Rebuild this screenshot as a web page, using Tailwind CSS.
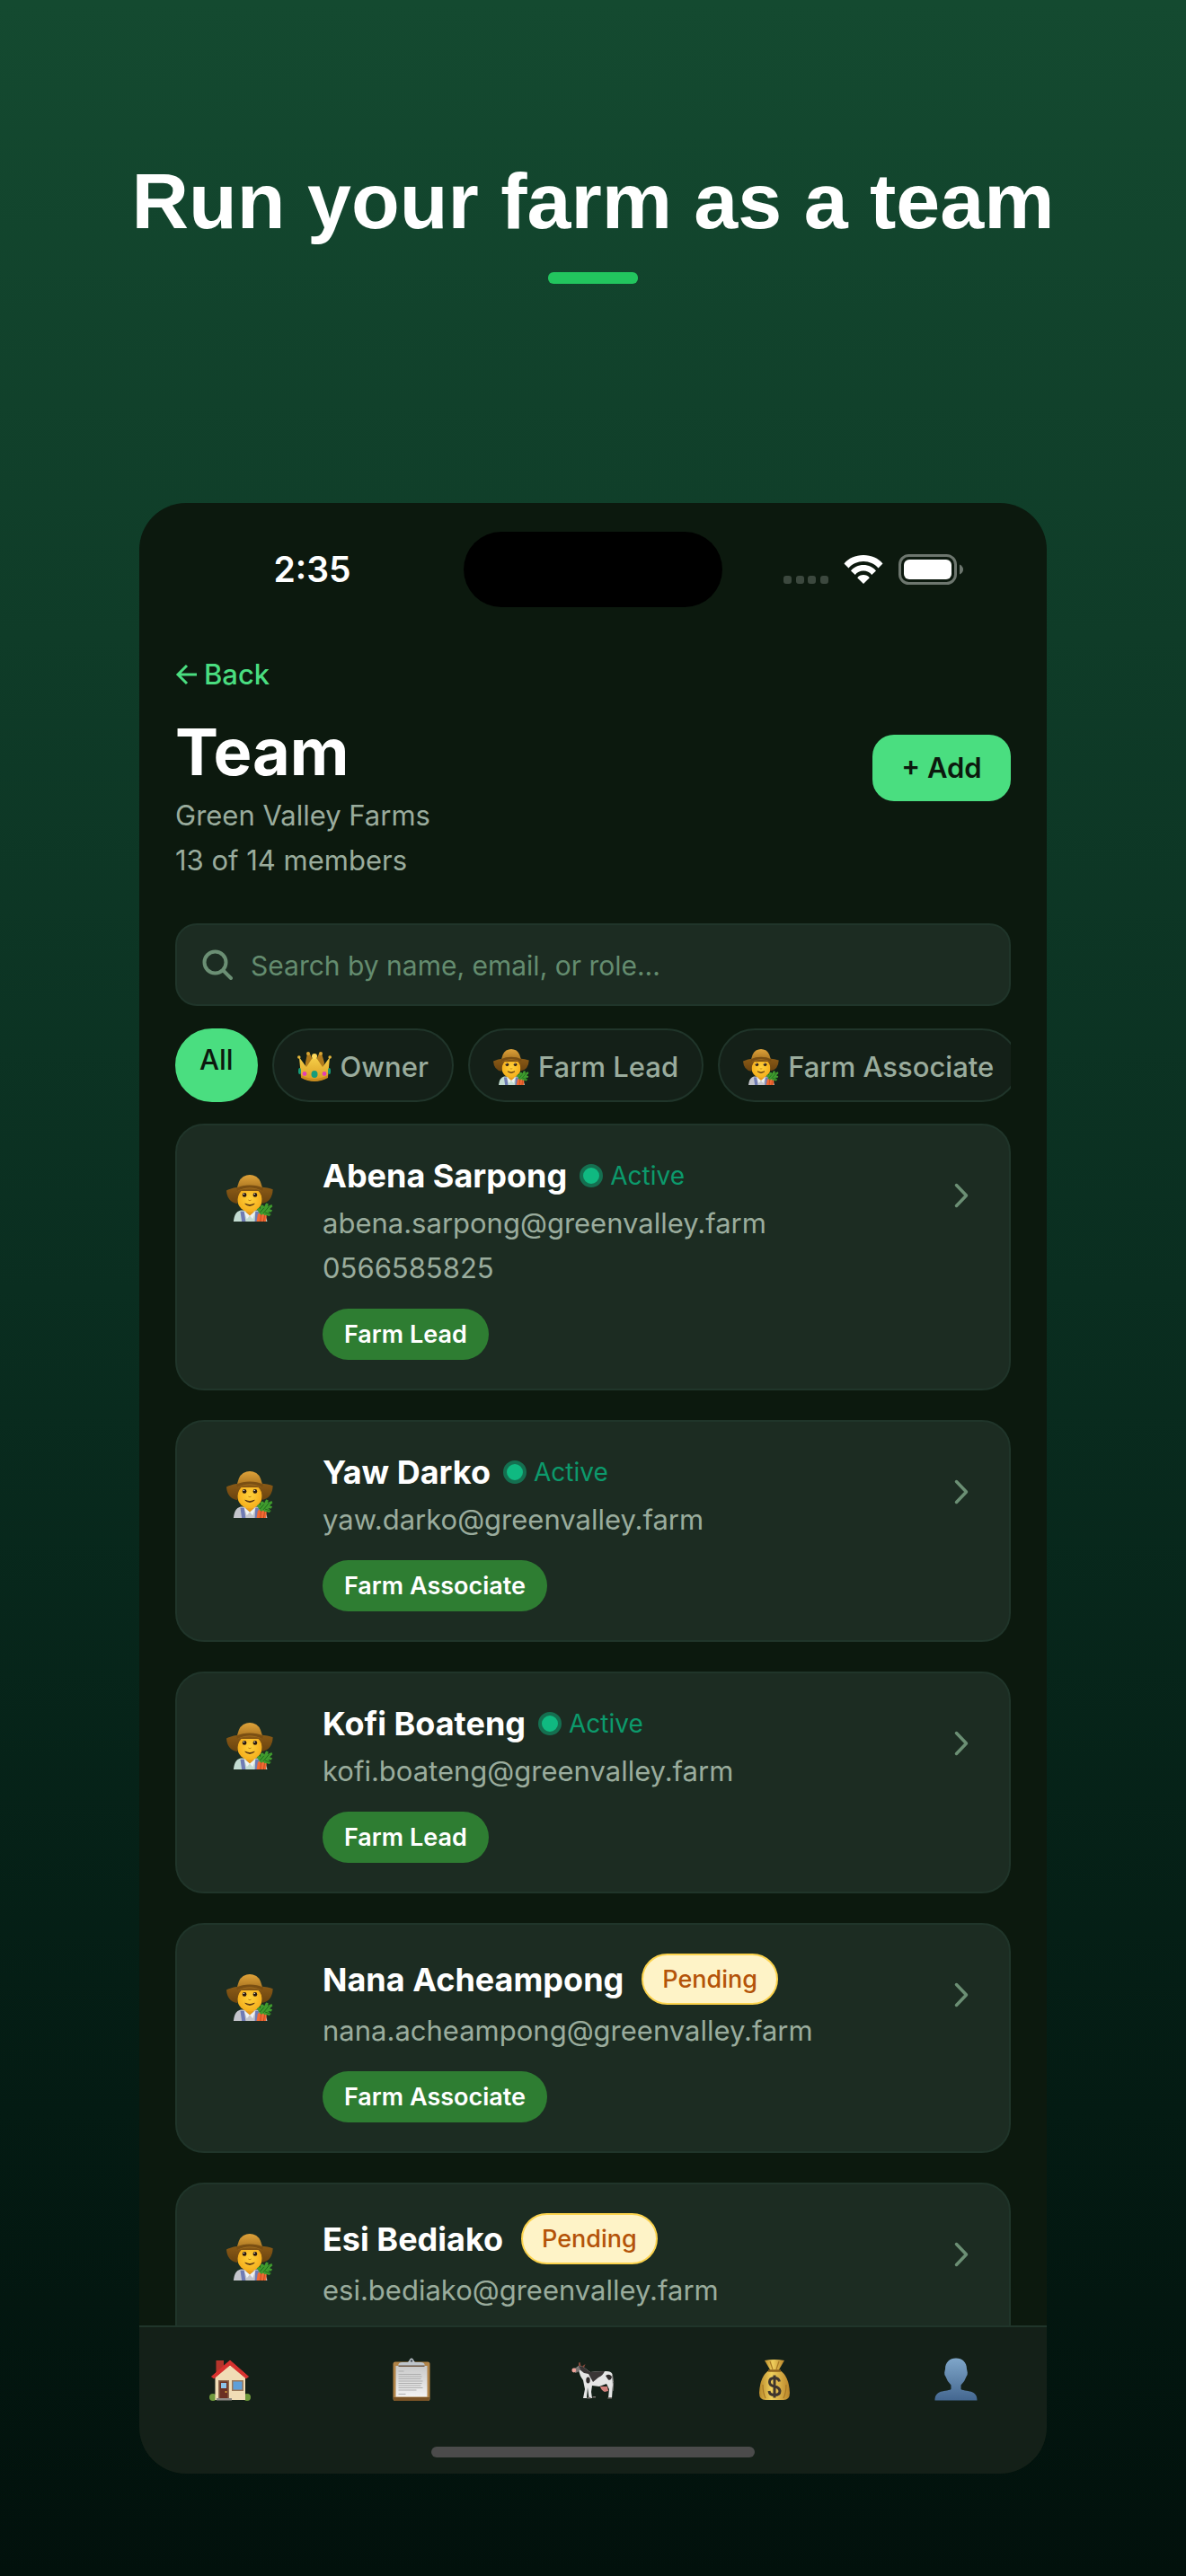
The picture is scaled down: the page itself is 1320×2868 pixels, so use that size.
<!DOCTYPE html>
<html lang="en">
<head>
<meta charset="utf-8">
<meta name="viewport" content="width=device-width, initial-scale=1">
<title>Run your farm as a team</title>
<script src="https://cdn.jsdelivr.net/npm/@tailwindcss/browser@4"></script>
</head>
<body class="flex h-screen flex-col items-center overflow-hidden bg-linear-to-b from-[#144a30] via-[#0a2e20] to-[#02110c] px-8 pt-[172px] pb-[114px] font-['Inter',sans-serif] text-white">

<!-- Shared drawings -->
<svg class="absolute h-0 w-0" aria-hidden="true">
  <defs>
    <linearGradient id="hatTop" x1="0" y1="0" x2="0" y2="1"><stop offset="0" stop-color="#dfa33a"/><stop offset="1" stop-color="#a06c1c"/></linearGradient>
    <linearGradient id="brim" x1="0" y1="0" x2="0" y2="1"><stop offset="0" stop-color="#8a5a16"/><stop offset="1" stop-color="#6a430f"/></linearGradient>
    <radialGradient id="skin"><stop offset="0" stop-color="#ffd23c"/><stop offset="1" stop-color="#f5ae1c"/></radialGradient>
    <linearGradient id="gold" x1="0" y1="0" x2="0" y2="1"><stop offset="0" stop-color="#f7d14a"/><stop offset="1" stop-color="#d99b22"/></linearGradient>
    <linearGradient id="sack" x1="0" y1="0" x2="1" y2="0"><stop offset="0" stop-color="#b98a2a"/><stop offset=".4" stop-color="#f0cf5c"/><stop offset="1" stop-color="#b9852a"/></linearGradient>
    <linearGradient id="person" x1="0" y1="0" x2="0" y2="1"><stop offset="0" stop-color="#7fa6c9"/><stop offset="1" stop-color="#446790"/></linearGradient>
    <linearGradient id="sheet" x1="0" y1="0" x2="0" y2="1"><stop offset="0" stop-color="#c9c9c9"/><stop offset="1" stop-color="#f2f2f2"/></linearGradient>
    <symbol id="farmer" viewBox="35 52 158 158">
      <path d="M59 210c2-20 8-34 24-38h60c16 4 26 16 30 38z" fill="currentColor"/>
      <path d="M82 176h13l5 34H87zM133 176h13l-2 34h-13z" fill="#6f7bb4"/>
      <path d="M101 160h26v18l-13 14-13-14z" fill="#e79a1c"/>
      <path d="M95 176l19 14-10 12zM133 176l-19 14 10 12z" fill="#eef2f2"/>
      <ellipse cx="114" cy="134" rx="42" ry="44" fill="url(#skin)"/>
      <path d="M72 150q-34-6-37-45 20-10 45-12h70q26 2 42 8-2 42-37 48 3-28-12-42H85q-14 16-13 43z" fill="url(#brim)"/>
      <path d="M70 108q3-38 22-50 22-12 44 0 18 12 22 50-20-10-44-10t-44 10z" fill="url(#hatTop)"/>
      <path d="M70 108q20-12 44-12t44 12l1-12q-20-9-45-9t-45 9z" fill="#7a4f13"/>
      <circle cx="96" cy="120" r="7" fill="#2a1a10"/><circle cx="132" cy="120" r="7" fill="#2a1a10"/>
      <circle cx="94" cy="117" r="2" fill="#fff"/><circle cx="130" cy="117" r="2" fill="#fff"/>
      <path d="M109 137q5 5 10 0" fill="none" stroke="#c57f12" stroke-width="3"/>
      <path d="M98 150q16 9 32 0-16 13-32 0z" fill="#3b1c0a" stroke="#3b1c0a" stroke-width="2"/>
      <path d="M141 186l8-6 6 4 8-2 8 8-2 20h-32z" fill="#f06a34"/>
      <path d="M152 186l-2 24M164 190l-3 20" stroke="#c4471c" stroke-width="3"/>
      <path d="M148 184l-10-16 8-6 3 6 1-12 9-2 4 6 6-12 8 2-2 8 13-6 3 7-10 9 9 3-3 7-11-1 10 9-6 6-12-4-4 2-4-6-6 4z" fill="#3f9b2e"/>
      <path d="M148 180l14-16M160 182l20-24M166 180l18 6" stroke="#1f6a1a" stroke-width="3"/>
    </symbol>
    <symbol id="chevron" viewBox="0 0 16 28"><path d="M2.500 2.500 13.500 14 2.500 25.500" fill="none" stroke="#6b8f74" stroke-width="3.500" stroke-linecap="round" stroke-linejoin="round"/></symbol>
  </defs>
</svg>

<h1 class="font-['Liberation_Sans',sans-serif] text-[88px] leading-[104px] font-bold">Run your farm as a team</h1>
<div class="mt-[27px] h-[13px] w-[100px] shrink-0 rounded-md bg-[#22c55e]"></div>

<div class="mt-[244px] flex min-h-0 w-full max-w-[1010px] flex-1 flex-col overflow-hidden rounded-[52px] bg-[#0c190e]">

  <!-- Status bar -->
  <div class="grid shrink-0 grid-cols-[1fr_288px_1fr] items-center pt-8">
    <div class="pl-6 text-center text-[39px] leading-[48px] font-semibold">2:35</div>
    <div class="h-[84px] rounded-full bg-black"></div>
    <div class="flex items-center justify-end gap-[17px] pr-[93px]">
      <svg class="h-[34px] w-[50px]" viewBox="0 0 50 34" fill="#3c483e"><rect y="24" width="9" height="9" rx="3"/><rect x="14" y="24" width="9" height="9" rx="3"/><rect x="27" y="24" width="9" height="9" rx="3"/><rect x="41" y="24" width="9" height="9" rx="3"/></svg>
      <svg class="h-[34px] w-[44px]" viewBox="0 0 44 34" fill="#fff"><path d="M22 1C13 1 5.500 4.500.5 10.500l5 5C9.500 10.800 15.500 8 22 8s12.500 2.800 16.500 7.500l5-5C38.500 4.500 31 1 22 1z"/><path d="M22 12c-5.800 0-10.800 2.400-14 6.500l4.800 4.500c2-2.800 5.400-4.500 9.200-4.500s7.200 1.700 9.200 4.500l4.800-4.500C32.800 14.400 27.800 12 22 12z"/><path d="M22 23c-2.800 0-5.200 1.200-6.800 3.200L22 33l6.800-6.800C27.200 24.200 24.800 23 22 23z"/></svg>
      <svg class="h-[34px] w-[72px]" viewBox="0 0 72 34"><rect x="1.500" y="1.500" width="62" height="31" rx="10" fill="none" stroke="#6d766e" stroke-width="3"/><rect x="6" y="6" width="53" height="22" rx="6" fill="#fff"/><path d="M68 11.500q4 2 4 5.500t-4 5.500z" fill="#6d766e"/></svg>
    </div>
  </div>

  <main class="flex min-h-0 flex-1 flex-col overflow-hidden px-10 pt-[55px]">
    <a href="#" class="flex shrink-0 items-center gap-2 self-start text-[31px] leading-10 font-medium text-[#4ade80]">
      <svg class="h-6 w-6" viewBox="0 0 24 24" fill="none" stroke="currentColor" stroke-width="3"><path d="M24 12H3M13 2 3 12l10 10"/></svg>Back</a>

    <div class="mt-6 flex shrink-0 items-start justify-between">
      <div>
        <h2 class="mb-1 text-[72px] leading-[84px] font-bold">Team</h2>
        <p class="text-[31px] leading-[50px] text-[#9aac9d]">Green Valley Farms</p>
        <p class="text-[31px] leading-[50px] text-[#9aac9d]">13 of 14 members</p>
      </div>
      <button type="button" class="mt-[23px] h-[74px] w-[154px] rounded-3xl bg-[#4ade80] text-[31px] font-semibold text-[#0c190e]">+ Add</button>
    </div>

    <label class="mt-[45px] flex h-[92px] shrink-0 items-center gap-5 rounded-3xl border-2 border-[#20352a] bg-[#1c2c22] px-7">
      <svg class="h-[34px] w-[34px]" viewBox="0 0 34 34" fill="none" stroke="#6b8f74" stroke-width="4" stroke-linecap="round" aria-hidden="true"><circle cx="14.500" cy="14.500" r="12"/><path d="M23.500 23.500 32 32"/></svg>
      <input type="search" aria-label="Search team" placeholder="Search by name, email, or role..." class="w-full flex-1 bg-transparent pt-0.5 text-[30px] outline-none placeholder:text-[#648c6f]">
    </label>

    <div class="mt-[25px] flex h-[82px] shrink-0 gap-4 overflow-hidden text-[31px] font-medium">
      <button type="button" class="flex shrink-0 items-start rounded-full border-2 border-[#4ade80] bg-[#4ade80] px-[25px] pt-3.5 leading-[38px] text-[#0c190e]">All</button>
      <button type="button" class="flex shrink-0 items-center gap-2.5 rounded-full border-2 border-[#20352a] bg-[#142018] px-[26px] pt-1 text-[#9aac9d]">
        <svg class="h-[34px] w-[38px]" viewBox="0 0 38 34" aria-hidden="true"><path d="M9 12 11 2h3l5 12 5-12h3l3 10-2 14H9z" fill="#b07a1c"/><path d="M2 6l8 11 8-12h2l8 12 8-11-2 22q-15 9-30 0z" fill="url(#gold)"/><path d="M4 26q15 8 30 0v3q-15 8-30 0z" fill="#c98c1e"/><circle cx="1.800" cy="6" r="1.800" fill="#e2b53c"/><circle cx="36.200" cy="6" r="1.800" fill="#e2b53c"/><circle cx="12" cy="2" r="2" fill="#d9a432"/><circle cx="26" cy="2" r="2" fill="#d9a432"/><circle cx="19" cy="5" r="3" fill="#ffd95a"/><ellipse cx="19" cy="25" rx="3.500" ry="4" fill="#169c7a"/><circle cx="8" cy="24.500" r="2.400" fill="#e23fb4"/><circle cx="30" cy="24.500" r="2.400" fill="#e23fb4"/><ellipse cx="2.500" cy="21.500" rx="1.500" ry="3.500" fill="#169c7a"/><ellipse cx="35.500" cy="21.500" rx="1.500" ry="3.500" fill="#169c7a"/></svg>Owner</button>
      <button type="button" class="flex shrink-0 items-center gap-2.5 rounded-full border-2 border-[#20352a] bg-[#142018] px-[26px] pt-1 text-[#9aac9d]">
        <svg class="h-10 w-10 text-[#c3dcd2]" aria-hidden="true"><use href="#farmer"/></svg>Farm Lead</button>
      <button type="button" class="flex shrink-0 items-center gap-2.5 rounded-full border-2 border-[#20352a] bg-[#142018] px-[26px] pt-1 text-[#9aac9d]">
        <svg class="h-10 w-10 text-[#c4c5cc]" aria-hidden="true"><use href="#farmer"/></svg>Farm Associate</button>
    </div>

    <ul class="mt-6 flex flex-col gap-[33px]">
      <li class="flex shrink-0 items-start rounded-[32px] border-2 border-[#20352a] bg-[#1c2c22] p-8">
        <div class="mr-8 flex size-[98px] shrink-0 items-center justify-center text-[#c3dcd2]"><svg class="size-[52px]" aria-hidden="true"><use href="#farmer"/></svg></div>
        <div class="flex-1">
          <div class="flex items-center gap-3.5">
            <h3 class="text-4xl leading-12 font-bold">Abena Sarpong</h3>
            <span class="flex items-center gap-2 text-[28px] leading-9 text-[#0c9a6c]"><i class="size-[26px] rounded-full border-4 border-[#156f50] bg-[#10b981]"></i>Active</span>
          </div>
          <p class="mt-1 text-[31px] leading-[50px] text-[#9aac9d]">abena.sarpong@greenvalley.farm</p>
          <p class="text-[31px] leading-[50px] text-[#9aac9d]">0566585825</p>
          <span class="mt-5 inline-block rounded-full bg-[#2e7d32] px-6 text-[27px] leading-[57px] font-semibold">Farm Lead</span>
        </div>
        <div class="flex h-[92px] w-[42px] shrink-0 items-center justify-center"><svg class="h-7 w-4" aria-hidden="true"><use href="#chevron"/></svg></div>
      </li>

      <li class="flex shrink-0 items-start rounded-[32px] border-2 border-[#20352a] bg-[#1c2c22] p-8">
        <div class="mr-8 flex size-[98px] shrink-0 items-center justify-center text-[#c4c5cc]"><svg class="size-[52px]" aria-hidden="true"><use href="#farmer"/></svg></div>
        <div class="flex-1">
          <div class="flex items-center gap-3.5">
            <h3 class="text-4xl leading-12 font-bold">Yaw Darko</h3>
            <span class="flex items-center gap-2 text-[28px] leading-9 text-[#0c9a6c]"><i class="size-[26px] rounded-full border-4 border-[#156f50] bg-[#10b981]"></i>Active</span>
          </div>
          <p class="mt-1 text-[31px] leading-[50px] text-[#9aac9d]">yaw.darko@greenvalley.farm</p>
          <span class="mt-5 inline-block rounded-full bg-[#2e7d32] px-6 text-[27px] leading-[57px] font-semibold">Farm Associate</span>
        </div>
        <div class="flex h-[92px] w-[42px] shrink-0 items-center justify-center"><svg class="h-7 w-4" aria-hidden="true"><use href="#chevron"/></svg></div>
      </li>

      <li class="flex shrink-0 items-start rounded-[32px] border-2 border-[#20352a] bg-[#1c2c22] p-8">
        <div class="mr-8 flex size-[98px] shrink-0 items-center justify-center text-[#c3dcd2]"><svg class="size-[52px]" aria-hidden="true"><use href="#farmer"/></svg></div>
        <div class="flex-1">
          <div class="flex items-center gap-3.5">
            <h3 class="text-4xl leading-12 font-bold">Kofi Boateng</h3>
            <span class="flex items-center gap-2 text-[28px] leading-9 text-[#0c9a6c]"><i class="size-[26px] rounded-full border-4 border-[#156f50] bg-[#10b981]"></i>Active</span>
          </div>
          <p class="mt-1 text-[31px] leading-[50px] text-[#9aac9d]">kofi.boateng@greenvalley.farm</p>
          <span class="mt-5 inline-block rounded-full bg-[#2e7d32] px-6 text-[27px] leading-[57px] font-semibold">Farm Lead</span>
        </div>
        <div class="flex h-[92px] w-[42px] shrink-0 items-center justify-center"><svg class="h-7 w-4" aria-hidden="true"><use href="#chevron"/></svg></div>
      </li>

      <li class="flex shrink-0 items-start rounded-[32px] border-2 border-[#20352a] bg-[#1c2c22] p-8">
        <div class="mr-8 flex size-[98px] shrink-0 items-center justify-center text-[#c4c5cc]"><svg class="size-[52px]" aria-hidden="true"><use href="#farmer"/></svg></div>
        <div class="flex-1">
          <div class="flex items-center gap-5">
            <h3 class="text-4xl leading-12 font-bold">Nana Acheampong</h3>
            <span class="rounded-full border-2 border-[#fcd34d] bg-[#fef3c7] px-[21px] text-[27px] leading-[53px] font-medium text-[#b45309]">Pending</span>
          </div>
          <p class="mt-1 text-[31px] leading-[50px] text-[#9aac9d]">nana.acheampong@greenvalley.farm</p>
          <span class="mt-5 inline-block rounded-full bg-[#2e7d32] px-6 text-[27px] leading-[57px] font-semibold">Farm Associate</span>
        </div>
        <div class="flex h-[92px] w-[42px] shrink-0 items-center justify-center"><svg class="h-7 w-4" aria-hidden="true"><use href="#chevron"/></svg></div>
      </li>

      <li class="flex shrink-0 items-start rounded-[32px] border-2 border-[#20352a] bg-[#1c2c22] p-8">
        <div class="mr-8 flex size-[98px] shrink-0 items-center justify-center text-[#c4c5cc]"><svg class="size-[52px]" aria-hidden="true"><use href="#farmer"/></svg></div>
        <div class="flex-1">
          <div class="flex items-center gap-5">
            <h3 class="text-4xl leading-12 font-bold">Esi Bediako</h3>
            <span class="rounded-full border-2 border-[#fcd34d] bg-[#fef3c7] px-[21px] text-[27px] leading-[53px] font-medium text-[#b45309]">Pending</span>
          </div>
          <p class="mt-1 mb-[77px] text-[31px] leading-[50px] text-[#9aac9d]">esi.bediako@greenvalley.farm</p>
        </div>
        <div class="flex h-[92px] w-[42px] shrink-0 items-center justify-center"><svg class="h-7 w-4" aria-hidden="true"><use href="#chevron"/></svg></div>
      </li>
    </ul>
  </main>

  <!-- Tab bar -->
  <nav class="shrink-0 border-t-2 border-[#20352a] bg-[#142018] pt-[34px] pb-[18px]">
    <div class="grid grid-cols-5 justify-items-center">
      <a href="#" aria-label="Home"><svg class="size-12" viewBox="0 0 48 48"><circle cx="5" cy="44" r="4" fill="#6f9a3c"/><circle cx="43" cy="44" r="4" fill="#6f9a3c"/><path d="M8.500 3H17v12l-8.500 7z" fill="#b5352c"/><path d="M7.500 21 24 6l17 15v26H7.500z" fill="#f1ddb6"/><path d="M24 3 3.500 21l2.500 2L24 8l18 15 2.500-2z" fill="#d8322f" stroke="#d8322f"/><path d="M11 25h12v22H11z" fill="#8f6a4e"/><path d="M12.500 26.500h9V47h-9z" fill="#6b2f22"/><path d="M14 28h6v6h-6z" fill="#8cc3ea"/><circle cx="19.500" cy="38" r="1" fill="#e8b53c"/><path d="M26 25h13v12H26z" fill="#9b7858"/><path d="M27.500 26.500h10v9h-10z" fill="#5f9fd8"/><path d="M9 45h17v2.500H9z" fill="#8f8a85"/></svg></a>
      <a href="#" aria-label="Tasks"><svg class="size-12" viewBox="0 0 48 48"><rect x="3.500" y="4.500" width="41" height="43.500" rx="2.500" fill="#b08347"/><path d="M4 44h40v2q0 2-2 2H6q-2 0-2-2z" fill="#7b5426"/><path d="M6.500 9h35v34.500h-35z" fill="url(#sheet)"/><path d="M9.500 10V7q1-2 4-2h6c2 0 2-4.500 4.500-4.500S26.500 5 28.500 5h6q3 0 4 2v3z" fill="#bfc5cb"/><path d="M9.500 8.500h29V10h-29z" fill="#6d5844"/><circle cx="24" cy="3.500" r="1.300" fill="#4a5058"/><path d="M9.500 15h6M9.500 18.500h25M9.500 21h26M9.500 23.500h25M9.500 26h27M9.500 28.500h26M9.500 31h25M9.500 33.500h27M9.500 36h20M9.500 40.500h8" stroke="#aeaeae" stroke-width="1.200"/></svg></a>
      <a href="#" aria-label="Livestock"><svg class="size-12" viewBox="0 0 48 48"><path d="M3 13l5-4 5 1q5 4 8 6 8-1 18-1 5 0 6.500 3l.5 13-1 14h-4l1-10-3-6-8 3-8-1-1 7 1 7h-3.500l-1.500-12-1 12h-4l2-10-2-10q-4-5-5-12l-2-2-3 1z" fill="#e6e6e6"/><path d="M8 9l5 1q5 4 8 6 8-1 16-1-2 5-7 7l-6 5q-3-5-5-9l-5-1-5-4-3-1z" fill="#3a3636"/><path d="M4 12l4-3 2 4-3 3-3 1z" fill="#7d7674"/><circle cx="2.800" cy="14" r="2.400" fill="#efa39a"/><path d="M8 9V5.500L9.500 5l1 4zM12 9.500 15.500 7 14 11z" fill="#8a4a3c"/><ellipse cx="18.500" cy="25" rx="2.200" ry="3.400" fill="#2f2b2b"/><path d="M38 20q4-3 7 1-1 5-4 3.500z" fill="#2f2b2b"/><path d="M32 32h8l1 5-4 1q-4-2-5-6z" fill="#d07f7a"/><path d="M45.500 19q2 8 .5 18" fill="none" stroke="#8d8886"/><path d="M18 44h3.500v1.500H17zM24 43h3v1.500h-4zM41 44h4v1.500h-5z" fill="#77706c"/></svg></a>
      <a href="#" aria-label="Finances"><svg class="size-12" viewBox="0 0 48 48"><path d="M13 3q5-1 11-1t11 1l-7 12h-8z" fill="url(#sack)"/><path d="M18 14h12q10 6 11 25 0 8-7 8H14q-7 0-7-8 1-19 11-25z" fill="url(#sack)"/><path d="M17 14.500h14" stroke="#8d601c" stroke-width="2.500"/><path d="M19 4l3 9M29 4l-3 9M11 30q0 9 3 15M37 30q0 9-3 15" fill="none" stroke="#a87824" stroke-width="1.200"/><path d="M29.500 26.500q-1-4-5.500-4-5.500 0-5.500 4.500 0 4 5.500 5t6 5q0 4.500-6 4.500-5.500 0-6-4.500M24 19.500v25" fill="none" stroke="#3e352e" stroke-width="3"/></svg></a>
      <a href="#" aria-label="Profile"><svg class="size-12" viewBox="0 0 48 48"><path d="M24 .5c7 0 12 4.500 12 12l.8 4q.3 3-1.300 4.500-1.500 5-6 9.500v4.500c3 2 9 1.500 13 3.500s5 5 5 9H.5c0-4 1-7 5-9s10-1.500 13-3.500v-4.500q-4.500-4.500-6-9.500-1.600-1.500-1.300-4.500l.8-4c0-7.500 5-12 12-12z" fill="url(#person)"/></svg></a>
    </div>
    <div class="mx-auto mt-[51px] h-3 w-[360px] rounded-md bg-[#4b4b4b]"></div>
  </nav>
</div>
</body>
</html>
